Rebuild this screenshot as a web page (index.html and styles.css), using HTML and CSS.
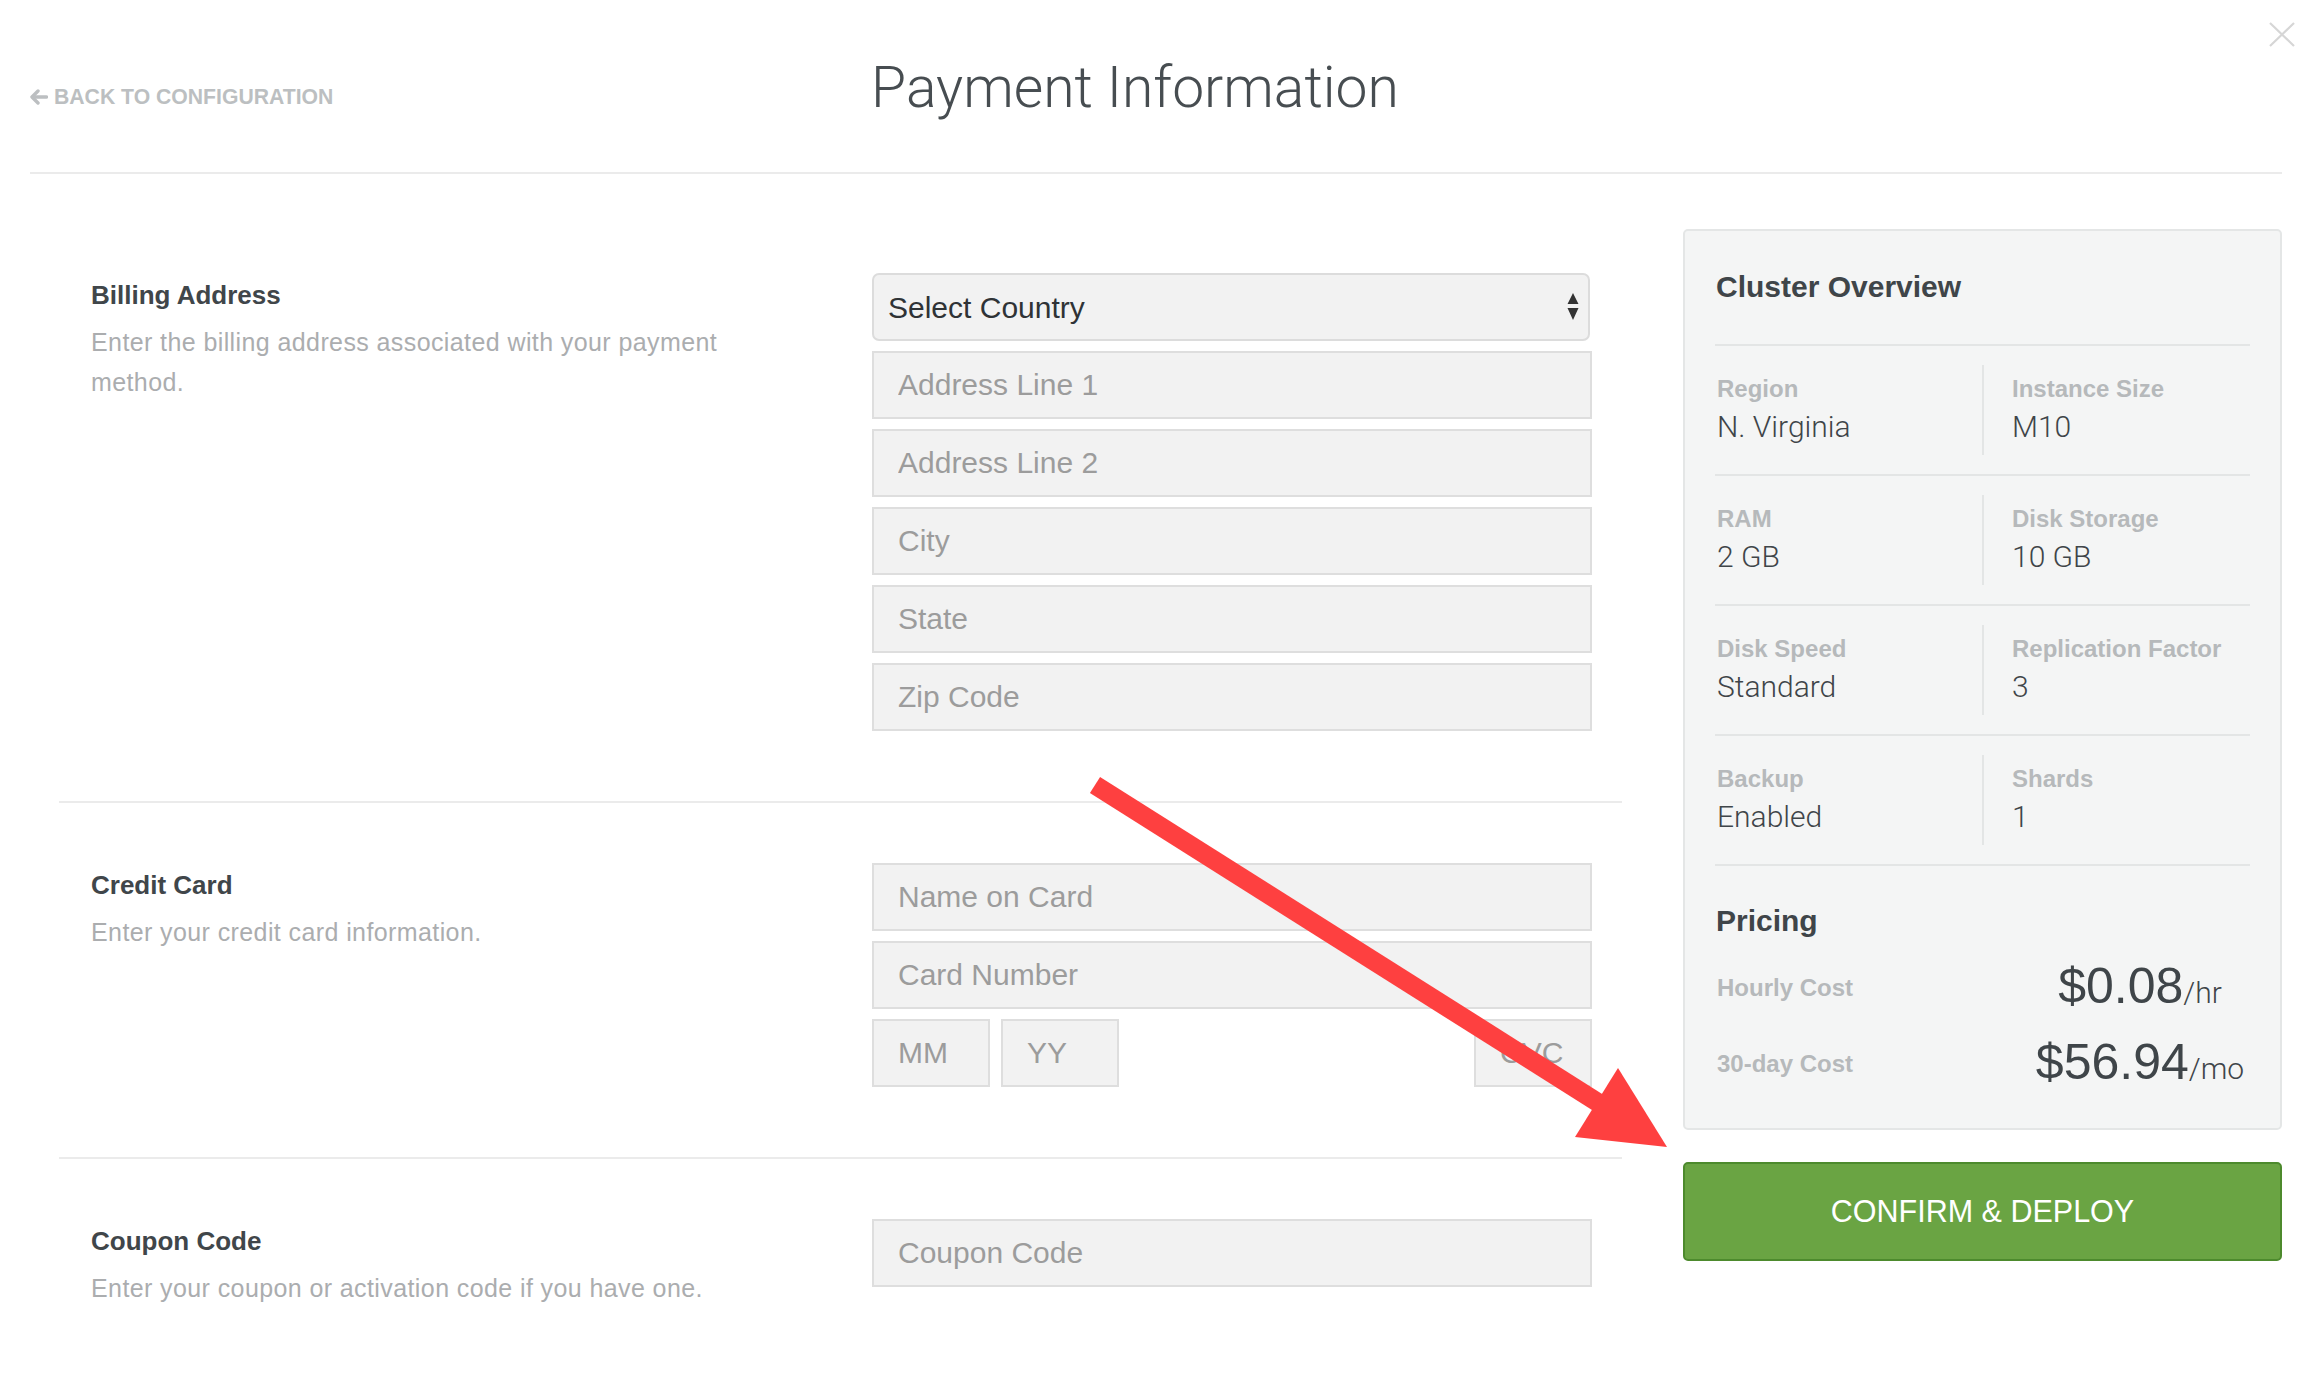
FILE: index.html
```html
<!DOCTYPE html>
<html lang="en">
<head>
<meta charset="utf-8">
<title>Payment Information</title>
<link rel="stylesheet" href="styles.css">
</head>
<body>
<div class="page">
  <header class="topbar">
    <a class="back" href="#">
      <svg class="back-icon" width="18" height="16" viewBox="0 0 18 16"><path d="M8 2 L2 8 L8 14" fill="none" stroke="currentColor" stroke-width="3.4" stroke-linecap="round" stroke-linejoin="round"/><path d="M3 8 H16.5" stroke="currentColor" stroke-width="3.4" stroke-linecap="round"/></svg>
      <span>BACK TO CONFIGURATION</span>
    </a>
    <h1 class="title">Payment Information</h1>
    <div class="spacer"></div>
    <button class="close" aria-label="Close">
      <svg width="26" height="25" viewBox="0 0 26 25"><path d="M1 1 L25 24 M25 1 L1 24" stroke="#d6d6d6" stroke-width="2.2" fill="none"/></svg>
    </button>
  </header>

  <main class="main">
    <div class="form-col">
      <section class="section">
        <div class="info">
          <h2 class="sec-title">Billing Address</h2>
          <p class="sec-desc">Enter the billing address associated with your payment method.</p>
        </div>
        <div class="fields">
          <div class="select-wrap">
            <select class="select"><option>Select Country</option></select>
            <svg class="select-arrows" width="12" height="28" viewBox="0 0 12 28"><path d="M6 0 L11.5 11 H0.5 Z M0.5 15 H11.5 L6 27 Z" fill="#333"/></svg>
          </div>
          <input class="input" placeholder="Address Line 1">
          <input class="input" placeholder="Address Line 2">
          <input class="input" placeholder="City">
          <input class="input" placeholder="State">
          <input class="input" placeholder="Zip Code">
        </div>
      </section>

      <section class="section">
        <div class="info">
          <h2 class="sec-title">Credit Card</h2>
          <p class="sec-desc">Enter your credit card information.</p>
        </div>
        <div class="fields">
          <input class="input" placeholder="Name on Card">
          <input class="input" placeholder="Card Number">
          <div class="exp-row">
            <input class="input small" placeholder="MM">
            <input class="input small" placeholder="YY">
            <input class="input small cvc" placeholder="CVC">
          </div>
        </div>
      </section>

      <section class="section last">
        <div class="info">
          <h2 class="sec-title">Coupon Code</h2>
          <p class="sec-desc">Enter your coupon or activation code if you have one.</p>
        </div>
        <div class="fields">
          <input class="input" placeholder="Coupon Code">
        </div>
      </section>
    </div>

    <aside class="aside">
      <div class="panel">
        <h3 class="panel-title">Cluster Overview</h3>
        <div class="spec-row">
          <div class="spec"><div class="spec-label">Region</div><div class="spec-value">N. Virginia</div></div>
          <div class="spec right"><div class="spec-label">Instance Size</div><div class="spec-value">M10</div></div>
        </div>
        <div class="spec-row">
          <div class="spec"><div class="spec-label">RAM</div><div class="spec-value">2 GB</div></div>
          <div class="spec right"><div class="spec-label">Disk Storage</div><div class="spec-value">10 GB</div></div>
        </div>
        <div class="spec-row">
          <div class="spec"><div class="spec-label">Disk Speed</div><div class="spec-value">Standard</div></div>
          <div class="spec right"><div class="spec-label">Replication Factor</div><div class="spec-value">3</div></div>
        </div>
        <div class="spec-row">
          <div class="spec"><div class="spec-label">Backup</div><div class="spec-value">Enabled</div></div>
          <div class="spec right"><div class="spec-label">Shards</div><div class="spec-value">1</div></div>
        </div>
        <h3 class="pricing-title">Pricing</h3>
        <div class="price-row">
          <div class="price-label">Hourly Cost</div>
          <div class="price"><span class="amount">$0.08</span><span class="unit">/hr</span></div>
        </div>
        <div class="price-row">
          <div class="price-label">30-day Cost</div>
          <div class="price"><span class="amount">$56.94</span><span class="unit">/mo</span></div>
        </div>
      </div>
      <button class="deploy">CONFIRM &amp; DEPLOY</button>
    </aside>
  </main>

  <svg class="annotation" width="2319" height="1375" viewBox="0 0 2319 1375">
    <line x1="1095" y1="785" x2="1605" y2="1107" stroke="#fe4040" stroke-width="19"/>
    <polygon points="1618,1068 1667,1147 1575,1137" fill="#fe4040"/>
  </svg>
</div>
</body>
</html>
```

FILE: styles.css
```css
* { box-sizing: border-box; }

html, body {
  margin: 0;
  padding: 0;
  background: #ffffff;
}

body {
  font-family: "Liberation Sans", Arial, sans-serif;
  color: #3f4549;
}

.page {
  position: relative;
  width: 2319px;
  min-height: 1375px;
}

/* Header */
.topbar {
  position: relative;
  margin: 0 37px 0 30px;
  height: 174px;
  border-bottom: 2px solid #ebebeb;
  display: grid;
  grid-template-columns: 1fr auto 1fr;
  align-items: start;
}

.back {
  display: flex;
  align-items: center;
  gap: 6px;
  padding-top: 85px;
  color: #bcbfc1;
  text-decoration: none;
  font-size: 21.2px;
  line-height: 24px;
  font-weight: 700;
}

.back-icon { flex: none; }

.title {
  margin: 0 42px 0 0;
  padding-top: 54px;
  font-family: Roboto, "Liberation Sans", Arial, sans-serif;
  font-size: 57px;
  line-height: 68px;
  font-weight: 300;
  color: #474d51;
}

.close {
  position: absolute;
  top: 22px;
  right: -13px;
  padding: 0;
  border: 0;
  background: none;
  line-height: 0;
}

/* Main */
.main {
  display: flex;
  gap: 61px;
  padding: 39px 37px 0 59px;
}

.form-col {
  flex: 1;
}

.section {
  display: grid;
  grid-template-columns: 1fr 720px;
  padding: 60px 30px 70px 32px;
  border-bottom: 2px solid #ebebeb;
}

.section.last { border-bottom: 0; }

.info { padding-top: 7px; }

.sec-title {
  margin: 0;
  font-size: 26px;
  line-height: 30px;
  font-weight: 700;
  color: #40464a;
}

.sec-desc {
  margin: 12px 0 0;
  max-width: 690px;
  font-size: 25px;
  line-height: 40px;
  font-weight: 400;
  letter-spacing: 0.4px;
  color: #abadaf;
}

.fields {
  display: flex;
  flex-direction: column;
  gap: 10px;
}

.input {
  display: block;
  width: 100%;
  height: 68px;
  margin: 0;
  padding: 0 24px;
  border: 2px solid #dedede;
  border-radius: 0;
  background: #f2f2f2;
  font-family: "Liberation Sans", Arial, sans-serif;
  font-size: 30px;
  font-weight: 400;
  color: #3f4549;
  outline: none;
}

.input::placeholder { color: #9c9c9c; opacity: 1; }

.select-wrap {
  position: relative;
}

.select {
  display: block;
  width: 718px;
  height: 68px;
  margin: 0;
  padding: 0 14px;
  border: 2px solid #dcdcdc;
  border-radius: 7px;
  background: #f2f2f2;
  font-family: "Liberation Sans", Arial, sans-serif;
  font-size: 30px;
  color: #2f3336;
  appearance: none;
  -webkit-appearance: none;
  outline: none;
}

.select-arrows {
  position: absolute;
  top: 20px;
  left: 695px;
  pointer-events: none;
}

.exp-row {
  display: flex;
  gap: 11px;
}

.input.small { width: 118px; }
.input.cvc { margin-left: auto; }

/* Aside */
.aside {
  width: 599px;
  flex: none;
  margin-top: 16px;
}

.panel {
  background: #f4f5f5;
  border: 2px solid #e4e6e6;
  border-radius: 5px;
  padding: 0 30px 38px;
}

.panel-title {
  margin: 0;
  padding: 39px 0 40px 1px;
  font-size: 30px;
  line-height: 34px;
  font-weight: 700;
  color: #3f4549;
  border-bottom: 2px solid #e3e5e5;
}

.spec-row {
  display: grid;
  grid-template-columns: 267px 1fr;
  padding: 19px 0;
  border-bottom: 2px solid #e3e5e5;
}

.spec {
  padding: 10px 0 11px 2px;
}

.spec.right {
  border-left: 2px solid #e3e5e5;
  padding-left: 28px;
}

.spec-label {
  font-size: 24px;
  line-height: 28px;
  font-weight: 700;
  color: #b6b9bb;
}

.spec-value {
  margin-top: 7px;
  font-family: Roboto, "Liberation Sans", Arial, sans-serif;
  font-size: 30px;
  line-height: 34px;
  font-weight: 300;
  color: #3f4549;
}

.pricing-title {
  margin: 0;
  padding: 38px 0 0 1px;
  font-size: 30px;
  line-height: 34px;
  font-weight: 700;
  color: #3f4549;
}

.price-row {
  display: grid;
  grid-template-columns: 1fr 220px;
  align-items: center;
  height: 56px;
  margin-top: 20px;
}

.price-label {
  padding: 0 0 8px 2px;
  font-size: 24px;
  line-height: 28px;
  font-weight: 700;
  color: #b6b9bb;
}

.price {
  text-align: center;
  white-space: nowrap;
  line-height: 56px;
  color: #3f4549;
}

.amount {
  font-size: 50px;
  font-weight: 400;
}

.unit {
  font-family: Roboto, "Liberation Sans", Arial, sans-serif;
  font-size: 30px;
  font-weight: 300;
}

.deploy {
  display: block;
  width: 100%;
  height: 99px;
  margin-top: 32px;
  border: 2px solid #4d8a2d;
  border-radius: 5px;
  background: #6aa443;
  color: #ffffff;
  font-family: "Liberation Sans", Arial, sans-serif;
  font-size: 30.5px;
  font-weight: 400;
}

/* Annotation overlay */
.annotation {
  position: absolute;
  top: 0;
  left: 0;
  pointer-events: none;
}
```
